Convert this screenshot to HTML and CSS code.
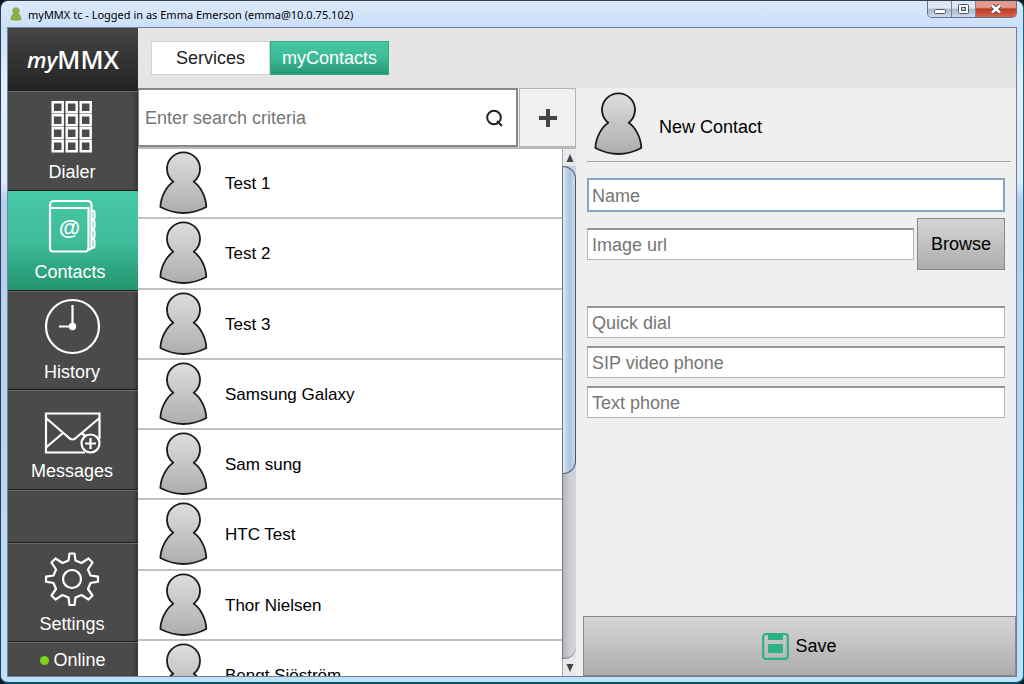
FILE: index.html
```html
<!DOCTYPE html>
<html lang="en">
<head>
<meta charset="utf-8">
<title>myMMX tc</title>
<link rel="stylesheet" href="styles.css">
</head>
<body>
<svg class="defs" aria-hidden="true">
  <defs>
    <linearGradient id="silver" x1="0" y1="0" x2="0" y2="1">
      <stop offset="0" stop-color="#dedede"/>
      <stop offset="1" stop-color="#adadad"/>
    </linearGradient>
    <symbol id="person" viewBox="0 0 50 64">
      <path d="M15.300 30.800 A16.500 16.500 0 1 1 35.700 30.800 C42 35 48 45 48.300 56 Q37 62 25.500 62 Q14 62 2.400 56 C2.700 45 9 35 15.300 30.800Z" fill="url(#silver)" stroke="#1c1c1c" stroke-width="1.800" stroke-linejoin="round"/>
    </symbol>
  </defs>
</svg>
<div class="window">
  <header class="titlebar">
    <svg class="app-icon" viewBox="0 0 12 14" aria-hidden="true"><path d="M3.300 6.300A3.600 3.600 0 1 1 8.700 6.300C10.500 8 11.500 10 11.500 13Q6 14.500.5 13C.5 10 1.500 8 3.300 6.300Z" fill="#8dae45"/></svg>
    <span class="title">myMMX tc - Logged in as Emma Emerson (emma@10.0.75.102)</span>
    <div class="window-buttons">
      <button class="wbtn" aria-label="Minimize"><svg viewBox="0 0 14 12"><rect x="1.500" y="6.500" width="11" height="4" rx="1" fill="#fff" stroke="#4b5669"/></svg></button>
      <button class="wbtn" aria-label="Maximize"><svg viewBox="0 0 14 12"><rect x="1.500" y="1.500" width="10" height="9" rx="1" fill="#fff" stroke="#4b5669"/><rect x="4.500" y="4.500" width="4" height="3" fill="#c3cad6" stroke="#4b5669"/></svg></button>
      <button class="wbtn close" aria-label="Close"><svg viewBox="0 0 14 12"><path d="M3 2.500l8 7m0-7l-8 7" stroke="#5a3c46" stroke-width="4.600"/><path d="M3 2.500l8 7m0-7l-8 7" stroke="#fff" stroke-width="2.800"/></svg></button>
    </div>
  </header>
  <div class="client">
    <nav class="sidebar">
      <div class="logo"><span class="logo-my">my</span><span class="logo-mmx">MMX</span></div>
      <a class="nav-item" href="#dialer">
        <svg viewBox="0 0 58 58" fill="none" stroke="#fff" stroke-width="2.400" aria-hidden="true"><path d="M9.700 4.200h10v10h-10zM23.700 4.200h10v10h-10zM37.700 4.200h10v10h-10zM9.700 17.200h10v10h-10zM23.700 17.200h10v10h-10zM37.700 17.200h10v10h-10zM9.700 30.200h10v10h-10zM23.700 30.200h10v10h-10zM37.700 30.200h10v10h-10zM9.700 43.200h10v10h-10zM23.700 43.200h10v10h-10zM37.700 43.200h10v10h-10z"/></svg>
        Dialer
      </a>
      <a class="nav-item active" href="#contacts" aria-current="page">
        <svg viewBox="0 0 58 58" fill="none" stroke="#fff" stroke-width="2.200" stroke-linejoin="round" aria-hidden="true"><g transform="translate(1.500 -1)"><path d="M7.500 9V51q0 3.500 3 3.500H42.500q3.500 0 3.500-3.500V11H9.500q-2 0-2-2.500 0-4.500 4-4.500H45q4 0 4 4V50q0 3-4.500 3M49 13.500q3 0 3 2v5q0 2-3 2M49 23q3 0 3 2v5q0 2-3 2M49 32.500q3 0 3 2v5q0 2-3 2M49 42q3 0 3 2v5q0 2-3 2"/><text class="at" x="27" y="38" text-anchor="middle">@</text></g></svg>
        Contacts
      </a>
      <a class="nav-item" href="#history">
        <svg viewBox="0 0 58 58" fill="none" stroke="#fff" stroke-width="2.200" aria-hidden="true"><circle cx="29.500" cy="28.500" r="26.500"/><path d="M29.500 7V28.500H16"/><circle cx="29.500" cy="28.500" r="2.600" fill="#fff"/></svg>
        History
      </a>
      <a class="nav-item" href="#messages">
        <svg viewBox="0 0 58 58" fill="none" stroke="#fff" stroke-width="2.200" aria-hidden="true"><path d="M42 55.500H3v-39h53.500V42M3 21l22 19q4.500 5 9 0L56.500 21M3 50.500l17-14.500M38.500 36l4 3"/><circle cx="47.500" cy="46.500" r="9"/><path d="M47.500 41v11M42 46.500h11"/></svg>
        Messages
      </a>
      <div class="spacer"></div>
      <a class="nav-item" href="#settings">
        <svg viewBox="0 0 58 58" fill="none" stroke="#fff" stroke-width="2.200" stroke-linejoin="round" aria-hidden="true"><path d="M25.500 10.500L26.500 3.500h5l1 7 6 2.500 7-4.500 4 4-4.500 7 2.500 6 7.500 1.200v5l-7.500 1.300-2.500 6 4.500 6.500-4 4-7-4.500-6 2.500-1 7.500h-5l-1-7.500-6-2.500-7 4.500-4-4 4.500-6.500-2.500-6L3 31.700v-5l7.500-1.200 2.500-6-4.500-7 4-4 7 4.500z"/><circle cx="29" cy="29" r="9"/></svg>
        Settings
      </a>
      <div class="status"><span class="dot"></span>Online</div>
    </nav>
    <div class="main">
      <div class="topbar">
        <button class="tab">Services</button><button class="tab selected">myContacts</button>
      </div>
      <div class="columns">
        <section class="contacts">
          <form class="searchbar">
            <label class="search">
              <input type="text" aria-label="Search contacts" placeholder="Enter search criteria">
              <svg viewBox="0 0 18 18" fill="none" stroke="#222" stroke-width="2" aria-hidden="true"><circle cx="9" cy="8.500" r="6.800"/><path d="M12 12l5 5"/></svg>
            </label>
            <button class="add" type="button" aria-label="Add contact"><svg viewBox="0 0 18 18" aria-hidden="true"><path d="M9 0v18M0 9h18" stroke="#444" stroke-width="4"/></svg></button>
          </form>
          <div class="list-area">
            <ul class="list">
              <li><svg class="person"><use href="#person"/></svg><span>Test 1</span></li>
              <li><svg class="person"><use href="#person"/></svg><span>Test 2</span></li>
              <li><svg class="person"><use href="#person"/></svg><span>Test 3</span></li>
              <li><svg class="person"><use href="#person"/></svg><span>Samsung Galaxy</span></li>
              <li><svg class="person"><use href="#person"/></svg><span>Sam sung</span></li>
              <li><svg class="person"><use href="#person"/></svg><span>HTC Test</span></li>
              <li><svg class="person"><use href="#person"/></svg><span>Thor Nielsen</span></li>
              <li><svg class="person"><use href="#person"/></svg><span>Bengt Sjöström</span></li>
            </ul>
            <div class="scrollbar">
              <button aria-label="Scroll up"><svg viewBox="0 0 8 8"><path d="M4 0l3.500 8h-7z" fill="#444"/></svg></button>
              <div class="track"><div class="thumb"></div></div>
              <button aria-label="Scroll down"><svg viewBox="0 0 8 8"><path d="M4 8l3.500-8h-7z" fill="#444"/></svg></button>
            </div>
          </div>
        </section>
        <form class="detail">
          <div class="heading"><svg class="person"><use href="#person"/></svg><h1>New Contact</h1></div>
          <div class="fields">
            <input class="field focused" type="text" aria-label="Name" placeholder="Name">
            <div class="image-row">
              <input class="field" type="text" aria-label="Image url" placeholder="Image url">
              <button class="browse" type="button">Browse</button>
            </div>
            <div class="phones">
              <input class="field" type="text" aria-label="Quick dial" placeholder="Quick dial">
              <input class="field" type="text" aria-label="SIP video phone" placeholder="SIP video phone">
              <input class="field" type="text" aria-label="Text phone" placeholder="Text phone">
            </div>
          </div>
          <button class="save" type="button"><svg viewBox="0 0 27 27" aria-hidden="true"><rect x="1.200" y="1.200" width="24.600" height="24.600" rx="2.500" fill="none" stroke="#2fb188" stroke-width="2.200"/><path d="M6 1h15v6H6zM6 11h15v9H6z" fill="#2fb188"/></svg>Save</button>
        </form>
      </div>
    </div>
  </div>
</div>
</body>
</html>
```
FILE: styles.css
```css
* { box-sizing: border-box; }

body {
  margin: 0;
  background: #071a22;
  font-family: "Liberation Sans", Arial, sans-serif;
  font-size: 17px;
  color: #000;
}

button, input { font: inherit; color: inherit; margin: 0; }
svg { display: block; }
.defs { position: absolute; width: 0; height: 0; }

.window {
  height: 100vh;
  display: flex;
  flex-direction: column;
  padding: 0 6px 5px;
  border: 1px solid #2d3f52;
  border-right-color: #0d6b80;
  border-bottom: 2px solid #075066;
  border-radius: 8px;
  background: linear-gradient(#dce9fa 0, #cbe0fa 26px, #e3eefb 80px, #dfeafa 180px, #b5cff0 200px, #b9d3f2 60%, #bfe2fa);
}

/* Title bar */
.titlebar {
  flex: none;
  height: 26px;
  display: flex;
  align-items: center;
  padding-left: 3px;
}
.app-icon { width: 12px; height: 14px; }
.title {
  flex: 1;
  margin-left: 6px;
  font: 11px "Noto Sans", sans-serif;
}
.window-buttons {
  align-self: flex-start;
  display: flex;
  border: 1px solid #66748a;
  border-top: 0;
  border-radius: 0 0 5px 5px;
  overflow: hidden;
}
.wbtn {
  width: 24px;
  height: 16px;
  display: grid;
  place-items: center;
  padding: 0;
  border: 0;
  border-right: 1px solid #77869b;
  background: linear-gradient(#dfe7f2 45%, #abbacd 50%, #c9d9eb);
}
.wbtn svg { width: 14px; height: 12px; }
.wbtn.close {
  width: 40px;
  border-right: 0;
  background: linear-gradient(#e39a8c 40%, #bd3a24 50%, #d4644a);
}

/* Client area */
.client {
  flex: 1;
  min-height: 0;
  display: flex;
  border: 1px solid #6c8296;
  background: #eee;
}

.sidebar {
  flex: none;
  width: 130px;
  display: grid;
  grid-template-rows: 62fr 100fr 100fr 99fr 100fr 53fr 99fr 35fr;
  background: #4a4a4a;
  color: #fff;
  font-size: 18px;
}
.logo {
  display: flex;
  align-items: center;
  justify-content: center;
  background: linear-gradient(#454545, #242424);
  font-family: "Open Sans", sans-serif;
  line-height: 1;
}
.logo-my { font-size: 22px; font-style: italic; font-weight: 600; }
.logo-mmx { font-size: 25px; font-weight: 600; }

.nav-item, .spacer, .status {
  border-top: 1px solid #1e1e1e;
  box-shadow: inset 0 1px #6c6c6c, inset -4px 0 4px -2px #333;
}
.nav-item {
  display: flex;
  flex-direction: column;
  align-items: center;
  padding: 7px 2px 0 0;
  color: inherit;
  line-height: 22px;
  text-decoration: none;
}
.nav-item svg { width: 58px; height: 58px; margin-bottom: 5px; }
.nav-item.active {
  padding-right: 6px;
  background: linear-gradient(#47c8a6, #3fbd9a 50%, #239470);
  box-shadow: none;
}
.at { font: bold 22px "Liberation Sans", sans-serif; fill: #fff; stroke: none; }
.status {
  display: flex;
  align-items: center;
  justify-content: center;
  gap: 4px;
  padding-top: 2px;
}
.dot { width: 9px; height: 9px; border-radius: 50%; background: #7ed321; }

.main { flex: 1; min-width: 0; display: flex; flex-direction: column; }

.topbar {
  flex: none;
  height: 60px;
  display: flex;
  align-items: center;
  padding-left: 13px;
  background: #e5e5e5;
}
.tab {
  width: 119px;
  height: 34px;
  padding: 0;
  border: 1px solid #d4d4d4;
  background: #fff;
  color: #222;
  font-size: 18px;
}
.tab.selected {
  border-color: #35ab88;
  background: linear-gradient(#46c6a4, #3dbb98 50%, #259872);
  color: #fff;
}

.columns {
  flex: 1;
  min-height: 0;
  display: grid;
  grid-template-columns: minmax(0, 438fr) minmax(0, 440fr);
}

/* Contact list */
.contacts { min-height: 0; display: flex; flex-direction: column; }
.searchbar { flex: none; display: flex; gap: 1px; height: 59px; }
.search {
  flex: 1;
  display: flex;
  align-items: center;
  padding-right: 13px;
  border: 2px solid #888;
  border-left-width: 1px;
  background: #fff;
}
.search input {
  flex: 1;
  min-width: 0;
  height: 100%;
  padding: 1px 6px 0;
  border: 0;
  outline: 0;
  background: none;
  font-size: 18px;
}
.search svg { width: 18px; height: 18px; }
::placeholder { color: #757575; opacity: 1; }
.add {
  width: 57px;
  display: grid;
  place-items: center;
  padding: 0;
  border: 1px solid #b4b4b4;
  background: #f0f0f0;
}
.add svg { width: 18px; height: 18px; }

.list-area { flex: 1; min-height: 0; display: flex; border-top: 2px solid #bbb; }
.list {
  flex: 1;
  margin: 0;
  padding: 0;
  overflow: hidden;
  background: #fff;
  list-style: none;
}
.list li {
  height: calc(100% / 7.5);
  display: flex;
  align-items: center;
  gap: 17px;
  padding-left: 20px;
  border-bottom: 2px solid #c0c0c0;
}
.list span { padding-top: 2px; }
.person { flex: none; width: 50px; height: 64px; }

.scrollbar {
  flex: none;
  width: 14px;
  display: flex;
  flex-direction: column;
  background: #e2e4ea;
}
.scrollbar button {
  flex: none;
  height: 17px;
  display: grid;
  place-items: center;
  padding: 0;
  border: 0;
  border-left: 1px solid #aaa;
  background: #e8e9ec;
}
.scrollbar svg { width: 8px; height: 8px; }
.track {
  flex: 1;
  border-left: 1px solid #777;
  border-bottom: 1px solid #777;
  border-radius: 0 0 12px 0;
  background: linear-gradient(90deg, #b5b5bb, #cdcdd5 50%, #d4d4dc);
}
.thumb {
  height: 62.5%;
  border: 1px solid #42586b;
  border-left: 0;
  border-radius: 0 13px 13px 0;
  background: linear-gradient(90deg, #dbe9f5, #a9c5dd 55%, #c5dced);
}

/* Contact form */
.detail { display: flex; flex-direction: column; padding-left: 7px; background: #efefef; }
.heading {
  flex: none;
  height: 74px;
  display: flex;
  align-items: center;
  gap: 16px;
  margin: 0 5px 0 4px;
  padding: 0 0 2px 6px;
  border-bottom: 1px solid #a5a5a5;
}
.heading h1 { margin: 0; padding-top: 7px; font-size: 18px; font-weight: normal; }
.fields {
  flex: 1;
  display: flex;
  flex-direction: column;
  gap: 6px;
  padding: 16px 11px 16px 4px;
}
.field {
  width: 100%;
  min-width: 0;
  height: 32px;
  padding: 2px 4px 0;
  border: 1px solid #b5b5b5;
  border-top: 2px solid #959595;
  outline: 0;
  background: #fff;
  font-size: 18px;
}
.field.focused {
  height: 34px;
  padding-left: 3px;
  border: 2px solid #86a5c5;
}
.image-row { display: flex; align-items: center; gap: 3px; }
.browse {
  flex: none;
  width: 88px;
  height: 52px;
  padding: 0;
  border: 1px solid #888;
  background: linear-gradient(#d5d5d5, #adadad);
  font-size: 18px;
}
.phones { display: flex; flex-direction: column; gap: 8px; margin-top: 30px; }
.save {
  flex: none;
  height: 60px;
  display: flex;
  align-items: center;
  justify-content: center;
  gap: 6px;
  border: 1px solid #888;
  background: linear-gradient(#d5d5d5, #adadad);
  font-size: 18px;
}
.save svg { width: 27px; height: 27px; }
```
